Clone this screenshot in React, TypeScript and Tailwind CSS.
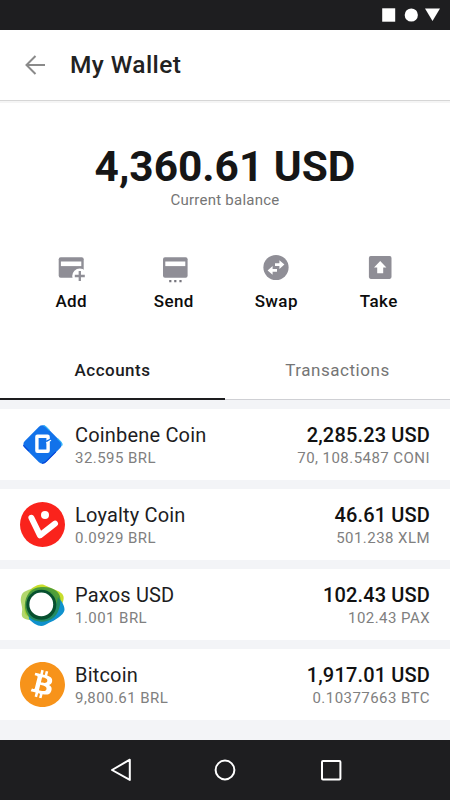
import type { ReactNode } from 'react'
import { FaBitcoin } from 'react-icons/fa'

interface Account {
  name: string
  balance: string
  value: string
  amount: string
  logo: ReactNode
}

function AddIcon() {
  return (
    <svg width="30" height="32" viewBox="0 0 30 32" fill="none">
      <rect x="2.7" y="5.3" width="25" height="20.4" rx="2" fill="#8f8e96" />
      <rect x="4.9" y="9.500" width="20.4" height="4.600" fill="#fff" />
      <circle cx="23.8" cy="24" r="7.6" fill="#fff" />
      <path d="M23.8 19v10M18.8 24h10" stroke="#8f8e96" strokeWidth="2.3" />
    </svg>
  )
}

function SendIcon() {
  return (
    <svg width="30" height="32" viewBox="0 0 30 32" fill="none">
      <rect x="4" y="5.3" width="24.6" height="20.4" rx="2" fill="#8f8e96" />
      <rect x="6.3" y="9.500" width="20" height="4.600" fill="#fff" />
      <path d="M10.2 28h2.2v2.2h-2.200zM15.2 28h2.2v2.2h-2.200zM20.4 28h2.2v2.2h-2.200z" fill="#77767e" />
    </svg>
  )
}

function SwapIcon() {
  return (
    <svg width="30" height="32" viewBox="0 0 30 32" fill="none">
      <circle cx="15" cy="15.5" r="12.6" fill="#8f8e96" />
      <path d="M14 11.2h4.4V8.3l5 4.3-5 4.300v-2.900H14zM16 17h-4.400v-2.900l-5 4.300 5 4.300v-2.900H16z" fill="#fff" />
    </svg>
  )
}

function TakeIcon() {
  return (
    <svg width="30" height="32" viewBox="0 0 30 32" fill="none">
      <rect x="4.900" y="4.100" width="22.600" height="22.8" rx="1.8" fill="#8f8e96" />
      <path d="M16.200 9l6.200 6.400h-3.200v5.800h-6v-5.800H10z" fill="#fff" />
    </svg>
  )
}

function CoinbeneLogo() {
  return (
    <svg width="45" height="45" viewBox="0 0 45 45" fill="none">
      <rect x="7.5" y="7.5" width="30" height="30" rx="5" transform="rotate(45 22.5 22.5)" fill="#1272ea" />
      <path d="M23.800 3.600q1.200.4 2.400 1.600l3.200 3.200M37.800 16.800l3 3q1.500 1.700 1 3.600" stroke="#2fb4f8" strokeWidth="1.200" strokeLinecap="round" />
      <path d="M3.600 23.600l5 5M35.500 30.200l-9 9q-2 2-4 2" stroke="#0a46d8" strokeWidth="1.200" strokeLinecap="round" />
      <rect x="16.900" y="14.200" width="11.200" height="15" rx=".5" stroke="#fff" strokeWidth="3.400" />
      <path d="M26.200 18.600l4-1.800v1.700l-4 2.600z" fill="#1272ea" />
      <path d="M26.200 21l4.800-2.800" stroke="#fff" strokeWidth="1.200" />
    </svg>
  )
}

function LoyaltyLogo() {
  return (
    <svg width="45" height="45" viewBox="0 0 45 45" fill="none">
      <circle cx="22.5" cy="22.5" r="22.5" fill="#fa231c" />
      <path d="M11.400 15.800L20 33.400 35 21.600" stroke="#fff" strokeWidth="6" strokeLinecap="round" strokeLinejoin="round" />
      <circle cx="25" cy="12.900" r="4" fill="#fff" />
    </svg>
  )
}

function PaxosLogo() {
  return (
    <svg width="45" height="45" viewBox="0 -1 45 45" fill="none">
      <path d="M13 4.500C17 2 19 1 23 1.500L39 8.500C44.500 11.500 44.500 15 42.500 20L37 32C33 38 25 38 19 37L7 33C3 30 4 22 7 14C8.500 9 10 6.500 13 4.500Z" fill="#c9de2c" />
      <path d="M6 8C9 6 14 5 20 5C30 5 39 12 39 22C39 34 30 38 20 38L9 37C3 36 1 34 2 29C3 24 .5 20 .8 16C1.500 11 2.500 9.500 6 8Z" fill="#98c93c" fillOpacity=".75" />
      <path d="M42 19C45 25 45.500 27 42.500 31C37 37 30 39 25 42C20 44.500 14 41.500 9 36L8 24C14 36 35 36 38 14Z" fill="#0f91cd" />
      <path d="M21 4C33 3 41 9 40.500 17C40 25 38 31 33 35C27 40 15 40 9 34C3 27 4 16 9 10C12 6 16 4.500 21 4Z" fill="#2b8a3e" fillOpacity=".75" />
      <circle cx="21.300" cy="21.800" r="15" fill="#07502f" />
      <circle cx="21.300" cy="21.400" r="11.900" fill="#fff" />
    </svg>
  )
}

const actions = [
  { label: 'Add', icon: <AddIcon /> },
  { label: 'Send', icon: <SendIcon /> },
  { label: 'Swap', icon: <SwapIcon /> },
  { label: 'Take', icon: <TakeIcon /> },
]

const accounts: Account[] = [
  { name: 'Coinbene Coin', balance: '32.595 BRL', value: '2,285.23 USD', amount: '70, 108.5487 CONI', logo: <CoinbeneLogo /> },
  { name: 'Loyalty Coin', balance: '0.0929 BRL', value: '46.61 USD', amount: '501.238 XLM', logo: <LoyaltyLogo /> },
  { name: 'Paxos USD', balance: '1.001 BRL', value: '102.43 USD', amount: '102.43 PAX', logo: <PaxosLogo /> },
  { name: 'Bitcoin', balance: '9,800.61 BRL', value: '1,917.01 USD', amount: '0.10377663 BTC', logo: <FaBitcoin viewBox="8 8 496 496" size={45} color="#f7931a" /> },
]

function AccountRow({ account }: { account: Account }) {
  return (
    <li className="flex h-[71px] items-center bg-white px-5">
      <div className="mr-[10px] h-[45px] w-[45px] flex-shrink-0">{account.logo}</div>
      <div className="flex-1 pt-0.5">
        <p className="text-[20px] leading-6 tracking-[0.18px] text-[#1d1d1f]">{account.name}</p>
        <p className="text-[15px] leading-[22px] tracking-[0.45px] text-[#808080]">{account.balance}</p>
      </div>
      <div className="pt-0.5 text-right">
        <p className="text-[20px] font-medium leading-6 tracking-[0.15px] text-[#111]">{account.value}</p>
        <p className="text-[15px] leading-[22px] tracking-[0.45px] text-[#808080]">{account.amount}</p>
      </div>
    </li>
  )
}

export default function App() {
  return (
    <div className="flex h-[800px] w-[450px] flex-col overflow-hidden bg-[#f3f4f7] font-['Roboto',sans-serif]">
      {/* Status bar */}
      <div className="flex h-[30px] flex-shrink-0 items-center justify-end bg-[#1e1e20] pr-2">
        <svg width="60" height="14" viewBox="0 0 60 14" fill="#fff">
          <rect x=".2" y=".3" width="13" height="13.400" />
          <circle cx="29.300" cy="7" r="6.600" />
          <path d="M43 .4h15L50.500 13z" />
        </svg>
      </div>

      <header className="flex h-[70px] flex-shrink-0 items-center bg-white pl-[25px]">
        <svg width="21" height="20" viewBox="0 0 21 20" fill="none" stroke="#8a8a8a" strokeWidth="2">
          <path d="M20 10H2M10.500 1L1.500 10l9 9" />
        </svg>
        <h1 className="ml-6 text-[24.500px] font-medium tracking-[0.4px] text-[#222]">My Wallet</h1>
      </header>
      <div className="h-[3px] flex-shrink-0 border-t border-[#d6d6d6] bg-[#f5f5f5]" />

      {/* Balance */}
      <section className="flex h-[149px] flex-shrink-0 flex-col items-center bg-white pt-[39px]">
        <p className="text-[42.4px] font-bold leading-[49px] text-[#161616]">4,360.61 USD</p>
        <p className="text-[15px] leading-[18px] tracking-[0.25px] text-[#757575]">Current balance</p>
      </section>

      <div className="grid h-[88px] flex-shrink-0 grid-cols-4 bg-white px-5">
        {actions.map((action) => (
          <button key={action.label} className="flex flex-col items-center">
            {action.icon}
            <span className="mt-[5px] text-[17px] font-medium leading-6 tracking-[0.4px] text-[#0c0c0c]">{action.label}</span>
          </button>
        ))}
      </div>

      {/* Tabs */}
      <div className="grid h-[60px] flex-shrink-0 grid-cols-2 bg-white text-[17px]">
        <button className="border-b-2 border-[#1d1d1f] pt-[3px] font-medium tracking-[0.5px] text-[#1d1d1f]">Accounts</button>
        <button className="border-b border-[#cfd0d4] pt-0.5 tracking-[0.55px] text-[#757575]">Transactions</button>
      </div>

      <ul className="flex flex-1 flex-col gap-[9px] pt-[9px]">
        {accounts.map((account) => (
          <AccountRow key={account.name} account={account} />
        ))}
      </ul>

      {/* Navigation bar */}
      <nav className="flex h-[60px] flex-shrink-0 items-center justify-center gap-[82px] bg-[#1e1e20]">
        <svg width="24" height="24" viewBox="0 0 24 24" fill="none" stroke="#fff" strokeWidth="2" strokeLinejoin="round">
          <path d="M22.800 1.700v20.200L5 12z" />
        </svg>
        <svg width="24" height="24" viewBox="0 0 24 24" fill="none" stroke="#fff" strokeWidth="2">
          <circle cx="12" cy="12" r="9.400" />
        </svg>
        <svg width="24" height="24" viewBox="0 0 24 24" fill="none" stroke="#fff" strokeWidth="2">
          <rect x="3" y="3" width="18.400" height="18.400" rx="1" />
        </svg>
      </nav>
    </div>
  )
}
